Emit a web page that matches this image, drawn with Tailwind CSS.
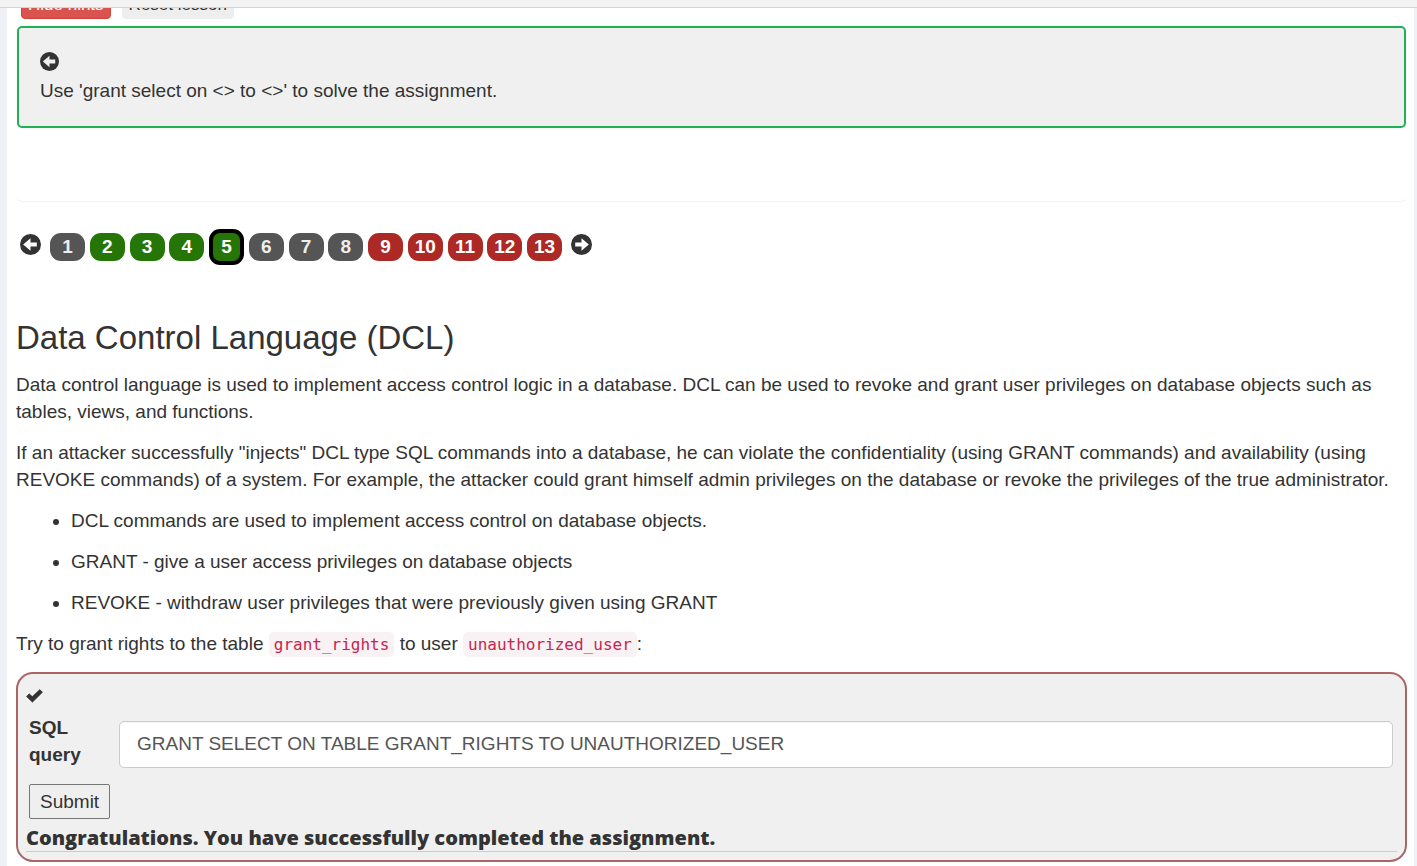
<!DOCTYPE html>
<html lang="en">
<head>
<meta charset="utf-8">
<meta name="viewport" content="width=device-width, initial-scale=1">
<title>SQL Injection (intro)</title>
<script src="https://cdn.jsdelivr.net/npm/@tailwindcss/browser@4"></script>
</head>
<body class="bg-[#f0f0f7] font-['Liberation_Sans',Arial,sans-serif] text-[19px] leading-[27px] text-[#333]">
<header class="h-2 border-b border-[#d5d5d8] bg-[#f2f2f2]"></header>
<main class="ml-[7px] mr-[3px] bg-white pr-[7px] pl-[9px] pb-1">
  <div class="flex h-[11px] items-end gap-[11px] overflow-hidden pl-[5px] text-[17px] leading-6">
    <button class="rounded-[4px] border border-[#d43f3a] bg-[#d9534f] px-[6px] pb-px text-white">Hide hints</button>
    <button class="rounded-[4px] border border-[#eee] bg-[#eee] px-[6px] pb-px">Reset lesson</button>
  </div>

  <section class="mt-[7px] rounded-b-md border-b border-[#f1f1f1] px-px pb-[73px]">
    <div class="rounded-[5px] border-2 border-[#22b056] bg-[#f0f0f0] px-[21px] pt-6 pb-[22px] shadow-xs">
      <button aria-label="Previous hint" class="block">
        <svg class="size-[19px]" viewBox="0 0 20 20"><circle cx="10" cy="10" r="10" fill="#333"/><path d="M3 10 10 4V8H16v4H10v4z" fill="#f0f0f0"/></svg>
      </button>
      <p class="mt-[6px]">Use 'grant select on &lt;&gt; to &lt;&gt;' to solve the assignment.</p>
    </div>
  </section>

  <nav aria-label="Lesson pages" class="mt-[27px] flex items-center gap-[9px] pl-1 font-bold text-white">
    <a href="#" aria-label="Previous page" class="-mt-1.5"><svg class="size-[21px]" viewBox="0 0 20 20"><circle cx="10" cy="10" r="10" fill="#333"/><path d="M3 10 10 4V8H16v4H10v4z" fill="#fff"/></svg></a>
    <div class="flex w-[512px] items-center justify-between">
      <a href="#" class="flex h-7 w-[35px] items-center justify-center rounded-[11px] bg-[#555] pb-0.5 text-[#eee]">1</a>
      <a href="#" class="flex h-7 w-[35px] items-center justify-center rounded-[11px] bg-[#257606] pb-0.5">2</a>
      <a href="#" class="flex h-7 w-[35px] items-center justify-center rounded-[11px] bg-[#257606] pb-0.5">3</a>
      <a href="#" class="flex h-7 w-[35px] items-center justify-center rounded-[11px] bg-[#257606] pb-0.5">4</a>
      <a href="#" aria-current="page" class="flex h-9 w-[35px] items-center justify-center rounded-[11px] border-4 border-black bg-[#257606] pb-0.5">5</a>
      <a href="#" class="flex h-7 w-[35px] items-center justify-center rounded-[11px] bg-[#555] pb-0.5 text-[#eee]">6</a>
      <a href="#" class="flex h-7 w-[35px] items-center justify-center rounded-[11px] bg-[#555] pb-0.5 text-[#eee]">7</a>
      <a href="#" class="flex h-7 w-[35px] items-center justify-center rounded-[11px] bg-[#555] pb-0.5 text-[#eee]">8</a>
      <a href="#" class="flex h-7 w-[35px] items-center justify-center rounded-[11px] bg-[#ac2925] pb-0.5">9</a>
      <a href="#" class="flex h-7 w-[35px] items-center justify-center rounded-[11px] bg-[#ac2925] pb-0.5">10</a>
      <a href="#" class="flex h-7 w-[35px] items-center justify-center rounded-[11px] bg-[#ac2925] pb-0.5">11</a>
      <a href="#" class="flex h-7 w-[35px] items-center justify-center rounded-[11px] bg-[#ac2925] pb-0.5">12</a>
      <a href="#" class="flex h-7 w-[35px] items-center justify-center rounded-[11px] bg-[#ac2925] pb-0.5">13</a>
    </div>
    <a href="#" aria-label="Next page" class="-mt-1.5"><svg class="size-[21px]" viewBox="0 0 20 20"><circle cx="10" cy="10" r="10" fill="#333"/><path d="M17 10 10 4V8H4v4h6v4z" fill="#fff"/></svg></a>
  </nav>

  <article class="mt-[54px] space-y-[14px]">
    <h2 class="text-[33px] leading-[38px]">Data Control Language (DCL)</h2>
    <p>Data control language is used to implement access control logic in a database. DCL can be used to revoke and grant user privileges on database objects such as tables, views, and functions.</p>
    <p>If an attacker successfully "injects" DCL type SQL commands into a database, he can violate the confidentiality (using GRANT commands) and availability (using REVOKE commands) of a system. For example, the attacker could grant himself admin privileges on the database or revoke the privileges of the true administrator.</p>
    <ul class="list-disc space-y-[14px] pl-[55px]">
      <li>DCL commands are used to implement access control on database objects.</li>
      <li>GRANT - give a user access privileges on database objects</li>
      <li>REVOKE - withdraw user privileges that were previously given using GRANT</li>
    </ul>
    <p>Try to grant rights to the table <code class="rounded-[5px] bg-[#f9f2f4] px-[5px] py-[3px] font-['DejaVu_Sans_Mono',monospace] text-[16px] text-[#c7254e]">grant_rights</code> to user <code class="rounded-[5px] bg-[#f9f2f4] px-[5px] py-[3px] font-['DejaVu_Sans_Mono',monospace] text-[16px] text-[#c7254e]">unauthorized_user</code>:</p>
  </article>

  <form class="mt-[14px] rounded-[17px] border-2 border-[#a66] bg-[#f0f0f0] px-2 pt-[15px] pb-2" onsubmit="return false">
    <svg class="block h-[14px] w-[17px]" viewBox="0 0 17 14" aria-label="Completed"><path d="M0.500 7.500 3.200 4.800 6.300 7.600 13.800 0.600 16.500 3.300 6.400 13.200z" fill="#333" stroke="#333" stroke-width="0.600" stroke-linejoin="round"/></svg>
    <div class="mt-[11px] flex items-end pr-1 pl-[3px]">
      <label for="query" class="w-[90px] pr-6 font-bold">SQL query</label>
      <input id="query" type="text" value="GRANT SELECT ON TABLE GRANT_RIGHTS TO UNAUTHORIZED_USER" class="h-[47px] min-w-0 flex-1 rounded-[5px] border border-[#ccc] bg-white px-[17px] pb-[2px] text-[#555] inset-shadow-xs">
    </div>
    <button class="mt-4 ml-[3px] block rounded-[2px] border border-[#767676] bg-[#efefef] px-[10px] py-[3px]">Submit</button>
    <p class="mt-[5px] border-b border-[#ccc] font-['Open_Sans',sans-serif] text-[20px] font-extrabold">Congratulations. You have successfully completed the assignment.</p>
  </form>
</main>
</body>
</html>
